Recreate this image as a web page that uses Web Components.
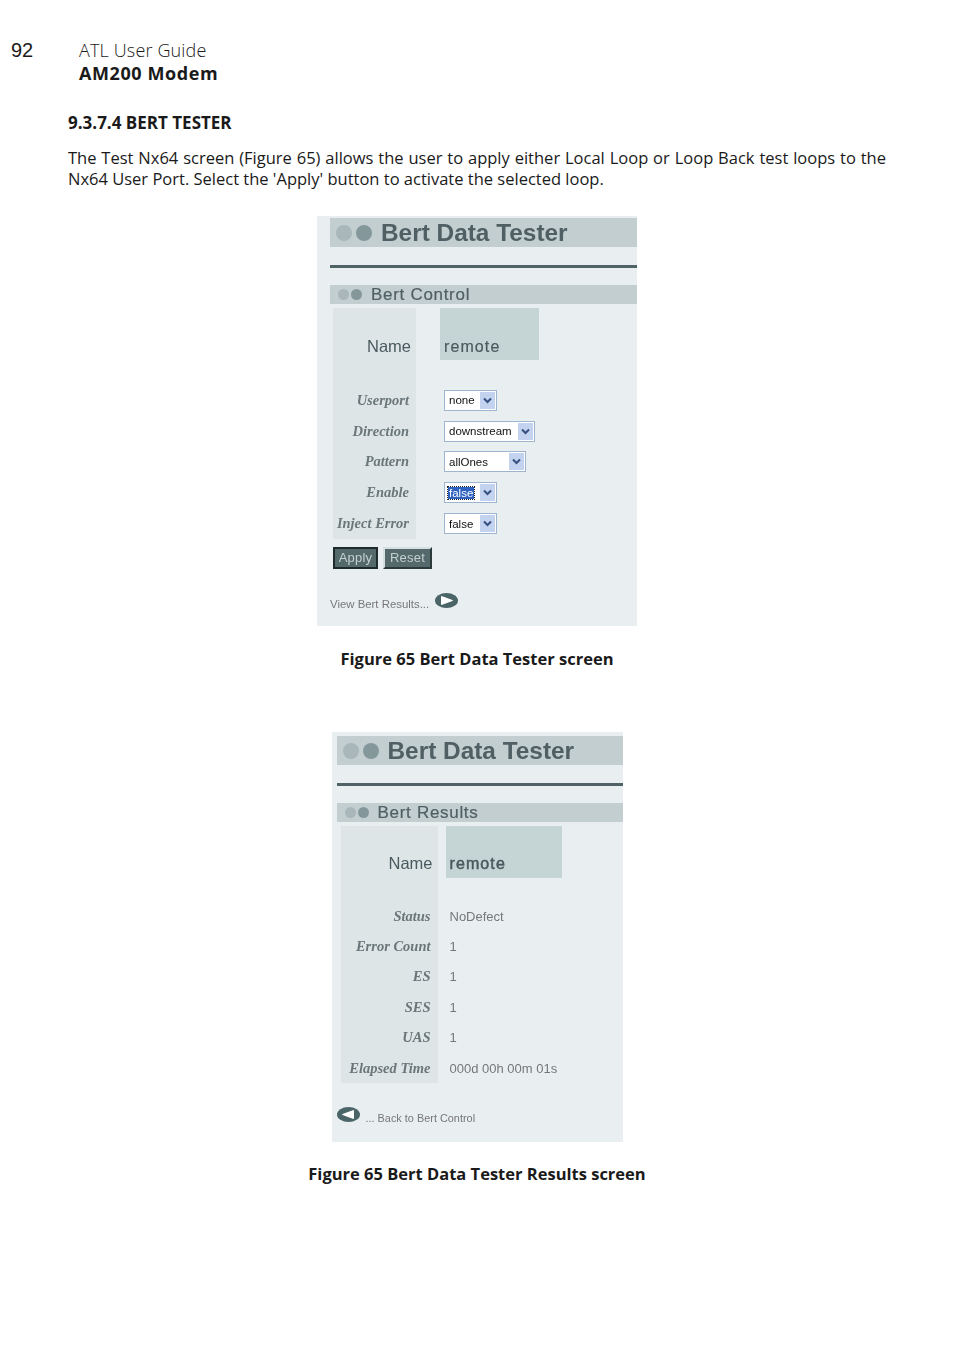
<!DOCTYPE html>
<html lang="en">
<head>
<meta charset="utf-8">
<title>ATL User Guide</title>
<style>
    body { margin: 0; background: #fff; }
</style>
</head>
<body>
<doc-page>
    <doc-header slot="header" page="92" guide="ATL User Guide" product="AM200 Modem"></doc-header>
    <doc-text heading="9.3.7.4 BERT TESTER">The Test Nx64 screen (Figure 65) allows the user to apply either Local Loop or Loop Back test loops to the Nx64 User Port. Select the 'Apply' button to activate the selected loop.</doc-text>

    <doc-figure caption="Figure 65 Bert Data Tester screen">
        <bert-panel section="Bert Control" style="--panel-w:320px; --pad:13px; --top:2px; --indent:3px; --label-w:83px; --label-pad:7px; --gap:24px; --cell-w:99px; --row-h:30.8px; --spacer:25px; --nudge:1px; --name-stroke:0.2px;">
            <bert-row name label="Name">remote</bert-row>
            <bert-row label="Userport"><bert-select value="none" width="53"></bert-select></bert-row>
            <bert-row label="Direction"><bert-select value="downstream" width="91"></bert-select></bert-row>
            <bert-row label="Pattern"><bert-select value="allOnes" width="82"></bert-select></bert-row>
            <bert-row label="Enable"><bert-select value="false" width="53" selected></bert-select></bert-row>
            <bert-row label="Inject Error"><bert-select value="false" width="53"></bert-select></bert-row>
            <bert-buttons></bert-buttons>
            <bert-link dir="next" text="View Bert Results..."></bert-link>
        </bert-panel>
    </doc-figure>

    <doc-figure caption="Figure 65 Bert Data Tester Results screen">
        <bert-panel section="Bert Results" style="--panel-w:291px; --pad:5px; --top:4px; --indent:4px; --label-w:97px; --label-pad:7px; --gap:8px; --cell-w:116px; --row-h:30.4px; --spacer:23px; --nudge:0px; --name-stroke:0.5px;">
            <bert-row name label="Name">remote</bert-row>
            <bert-row label="Status">NoDefect</bert-row>
            <bert-row label="Error Count">1</bert-row>
            <bert-row label="ES">1</bert-row>
            <bert-row label="SES">1</bert-row>
            <bert-row label="UAS">1</bert-row>
            <bert-row label="Elapsed Time">000d 00h 00m 01s</bert-row>
            <bert-link dir="back" text="... Back to Bert Control"></bert-link>
        </bert-panel>
    </doc-figure>
</doc-page>

<script>
// Small helper: every element clones its own template into an open shadow root
function makeShadow(el, html) {
    const template = document.createElement('template');
    template.innerHTML = html;
    el.attachShadow({ mode: 'open' }).appendChild(template.content.cloneNode(true));
}

class DocPage extends HTMLElement {
    constructor() {
        super();
        makeShadow(this, `
            <style>
                :host { display: block; width: 954px; height: 1351px; box-sizing: border-box; padding-top: 39px; font-family: "Open Sans", sans-serif; color: #1a1a1a; overflow: hidden; }
            </style>
            <slot name="header"></slot>
            <slot></slot>
        `);
    }
}

class DocHeader extends HTMLElement {
    constructor() {
        super();
        makeShadow(this, `
            <style>
                :host { display: flex; padding-left: 11px; }
                .page { width: 68px; font: 20px/23px "Liberation Sans", sans-serif; }
                .guide { font-size: 18px; line-height: 23px; font-weight: 300; letter-spacing: 0.15px; }
                .product { font-size: 18px; line-height: 23px; font-weight: 700; letter-spacing: 0.6px; }
            </style>
            <div class="page"></div>
            <div>
                <div class="guide"></div>
                <div class="product"></div>
            </div>
        `);
    }
    connectedCallback() {
        const shadow = this.shadowRoot;
        shadow.querySelector('.page').textContent = this.getAttribute('page');
        shadow.querySelector('.guide').textContent = this.getAttribute('guide');
        shadow.querySelector('.product').textContent = this.getAttribute('product');
    }
}

class DocText extends HTMLElement {
    constructor() {
        super();
        makeShadow(this, `
            <style>
                :host { display: block; padding: 27px 68px 0 68px; }
                h3 { margin: 0 0 13px 0; font-size: 17px; line-height: 22px; font-weight: 700; }
                p { margin: 0; font-size: 16.5px; line-height: 21px; text-align: justify; font-weight: 400; }
            </style>
            <h3></h3>
            <p><slot></slot></p>
        `);
    }
    connectedCallback() {
        this.shadowRoot.querySelector('h3').textContent = this.getAttribute('heading');
    }
}

class DocFigure extends HTMLElement {
    constructor() {
        super();
        makeShadow(this, `
            <style>
                :host { display: flex; flex-direction: column; align-items: center; margin-top: 27px; }
                :host(:last-child) { margin-top: 62px; }
                .cap { margin-top: 22px; font-size: 16.5px; line-height: 22px; font-weight: 700; }
                :host(:last-child) .cap { margin-top: 21px; }
            </style>
            <slot></slot>
            <div class="cap"></div>
        `);
    }
    connectedCallback() {
        this.shadowRoot.querySelector('.cap').textContent = this.getAttribute('caption');
    }
}

function dots(size, gap, c1, c2) {
    const r = size / 2;
    return `<svg width="${size * 2 + gap}" height="${size}" viewBox="0 0 ${size * 2 + gap} ${size}">
        <circle cx="${r}" cy="${r}" r="${r}" fill="${c1}"/>
        <circle cx="${size + gap + r}" cy="${r}" r="${r}" fill="${c2}"/>
    </svg>`;
}

class BertPanel extends HTMLElement {
    constructor() {
        super();
        makeShadow(this, `
            <style>
                :host { display: block; width: var(--panel-w); height: 410px; box-sizing: border-box; padding: var(--top) 0 0 var(--pad); background: #e9eef1; font-family: "Liberation Sans", sans-serif; filter: blur(0.35px); }
                .bar { display: flex; align-items: center; background: #c3ced1; color: #4f5f63; }
                .title { height: 29px; padding-left: 6px; gap: 9px; font-size: 24.4px; font-weight: 700; }
                hr { height: 3px; margin: 18px 0 17px 0; border: 0; background: #4f6266; }
                .section { height: 19px; padding-left: 8px; gap: 9px; font-size: 17px; letter-spacing: 0.7px; margin-bottom: 4px; -webkit-text-stroke: 0.2px #4f5f63; }
                svg { display: block; }
            </style>
            <div class="bar title">${dots(16, 4, '#a9b6ba', '#84989c')}<span>Bert Data Tester</span></div>
            <hr>
            <div class="bar section">${dots(11, 2, '#a9b6ba', '#84989c')}<span class="sec"></span></div>
            <slot></slot>
        `);
    }
    connectedCallback() {
        this.shadowRoot.querySelector('.sec').textContent = this.getAttribute('section');
    }
}

class BertRow extends HTMLElement {
    constructor() {
        super();
        makeShadow(this, `
            <style>
                :host { display: flex; align-items: stretch; height: var(--row-h); margin-left: var(--indent); color: #777; font-size: 13px; }
                :host([name]) { height: calc(52px + var(--spacer)); }
                .label { box-sizing: border-box; width: var(--label-w); padding-right: var(--label-pad); background: #dde5e7; display: flex; align-items: center; justify-content: flex-end; font: italic bold 14.5px "Liberation Serif", serif; color: #6a7679; }
                .value { margin-left: var(--gap); padding-left: 4px; display: flex; align-items: center; }
                :host([name]) .label { align-items: flex-start; padding-top: calc(28px + var(--nudge)); padding-right: 5px; font: 16.5px "Liberation Sans", sans-serif; color: #4a5a5e; }
                :host([name]) .value { box-sizing: border-box; width: var(--cell-w); height: 52px; background: #c5d5d6; padding-top: calc(24px + var(--nudge) * 2); font-size: 16px; letter-spacing: 1.1px; color: #4a5a5e; -webkit-text-stroke: var(--name-stroke) #4a5a5e; }
            </style>
            <div class="label"></div>
            <div class="value"><slot></slot></div>
        `);
    }
    connectedCallback() {
        this.shadowRoot.querySelector('.label').textContent = this.getAttribute('label');
    }
}

class BertSelect extends HTMLElement {
    constructor() {
        super();
        makeShadow(this, `
            <style>
                :host { display: flex; align-items: center; box-sizing: border-box; height: 21px; background: #fff; border: 1px solid #9db5cf; padding: 1px; font: 11.5px "Liberation Sans", sans-serif; color: #111; }
                .txt { flex: 1; padding-left: 3px; }
                :host([selected]) .txt { padding-left: 2px; }
                :host([selected]) .txt span { display: inline-block; background: #2f62c0; color: #fff; outline: 1px dotted #222; padding: 0 1px; }
                .btn { width: 15px; height: 17px; background: #c3d2ef; display: flex; align-items: center; justify-content: center; }
            </style>
            <div class="txt"><span></span></div>
            <div class="btn">
                <svg width="9" height="7" viewBox="0 0 9 7"><path d="M1 1.5 L4.5 5 L8 1.5" fill="none" stroke="#35507f" stroke-width="2"/></svg>
            </div>
        `);
    }
    connectedCallback() {
        this.shadowRoot.querySelector('span').textContent = this.getAttribute('value');
        this.style.width = this.getAttribute('width') + 'px';
    }
}

class BertButtons extends HTMLElement {
    constructor() {
        super();
        makeShadow(this, `
            <style>
                :host { display: flex; gap: 5px; margin: 8px 0 0 3px; }
                button { box-sizing: border-box; height: 22px; padding: 0; background: #54696c; color: #c4d0d0; font: 13px "Liberation Sans", sans-serif; letter-spacing: 0.2px; }
                .apply { width: 45px; border: 2px solid #1e2a2c; }
                .reset { width: 49px; border: 2px solid; border-color: #d5dee0 #2c3a3c #2c3a3c #d5dee0; }
            </style>
            <button class="apply">Apply</button>
            <button class="reset">Reset</button>
        `);
    }
}

class BertLink extends HTMLElement {
    constructor() {
        super();
        makeShadow(this, `
            <style>
                :host { display: flex; align-items: flex-end; gap: 6px; margin-top: 24px; font: 11.4px "Liberation Sans", sans-serif; color: #777; }
                :host([dir="back"]) { flex-direction: row-reverse; justify-content: flex-end; font-size: 10.9px; }
                span { margin-bottom: 1px; }
                svg { display: block; margin-bottom: 3px; }
            </style>
            <span></span>
            <svg width="23" height="15" viewBox="0 0 23 15">
                <ellipse cx="11.5" cy="7.5" rx="11.5" ry="7.5" fill="#4a6468"/>
                <path class="tri" d="M6.5 3.5 L17.5 7.5 L6.5 11.5 Z" fill="#fff" stroke="#fff" stroke-linejoin="round"/>
            </svg>
        `);
    }
    connectedCallback() {
        this.shadowRoot.querySelector('span').textContent = this.getAttribute('text');
        if (this.getAttribute('dir') === 'back') {
            this.shadowRoot.querySelector('.tri').setAttribute('d', 'M16.5 3.5 L5.5 7.5 L16.5 11.5 Z');
        }
    }
}

customElements.define('doc-page', DocPage);
customElements.define('doc-header', DocHeader);
customElements.define('doc-text', DocText);
customElements.define('doc-figure', DocFigure);
customElements.define('bert-panel', BertPanel);
customElements.define('bert-row', BertRow);
customElements.define('bert-select', BertSelect);
customElements.define('bert-buttons', BertButtons);
customElements.define('bert-link', BertLink);
</script>
</body>
</html>
